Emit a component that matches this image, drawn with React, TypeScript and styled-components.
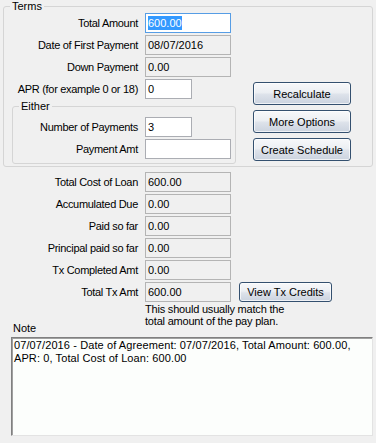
import styled, {createGlobalStyle, css} from "styled-components";

const GlobalStyle = createGlobalStyle`
    html, body {
        margin: 0;
        padding: 0;
        background: #f0f0f0;
    }
    body {
        font: 11px "Liberation Sans", Arial, sans-serif;
        color: #000;
    }
`

type FieldProps = {
    $readOnly?: boolean,
    $focused?: boolean,
    $short?: boolean,
}

function Row({label, value, readOnly, focused, short, labelWidth}: {
    label: string, value?: string, readOnly?: boolean, focused?: boolean, short?: boolean, labelWidth: number
}) {
    return (
        <FieldRow>
            <Label style={{width: labelWidth}}>{label}</Label>
            <Field $readOnly={readOnly} $focused={focused} $short={short}>
                {focused ? <Selected>{value}</Selected> : value}
            </Field>
        </FieldRow>
    )
}

function App() {
    return (
        <>
            <GlobalStyle/>
            <Page>
                <Group>
                    <Legend>Terms</Legend>
                    <TermsBody>
                        <LeftCol>
                            <Rows>
                                <Row labelWidth={134} label="Total Amount" value="600.00" focused/>
                                <Row labelWidth={134} label="Date of First Payment" value="08/07/2016" readOnly/>
                                <Row labelWidth={134} label="Down Payment" value="0.00" readOnly/>
                                <Row labelWidth={134} label="APR (for example 0 or 18)" value="0" short/>
                            </Rows>
                            <EitherGroup>
                                <Legend>Either</Legend>
                                <Rows>
                                    <Row labelWidth={125} label="Number of Payments" value="3" short/>
                                    <Row labelWidth={125} label="Payment Amt" value=""/>
                                </Rows>
                            </EitherGroup>
                        </LeftCol>
                        <Buttons>
                            <Button>Recalculate</Button>
                            <Button>More Options</Button>
                            <Button>Create Schedule</Button>
                        </Buttons>
                    </TermsBody>
                </Group>

                <Summary>
                    <Row labelWidth={138} label="Total Cost of Loan" value="600.00" readOnly/>
                    <Row labelWidth={138} label="Accumulated Due" value="0.00" readOnly/>
                    <Row labelWidth={138} label="Paid so far" value="0.00" readOnly/>
                    <Row labelWidth={138} label="Principal paid so far" value="0.00" readOnly/>
                    <Row labelWidth={138} label="Tx Completed Amt" value="0.00" readOnly/>
                    <FieldRow>
                        <Label style={{width: 138}}>Total Tx Amt</Label>
                        <Field $readOnly>600.00</Field>
                        <SmallButton>View Tx Credits</SmallButton>
                    </FieldRow>
                </Summary>

                <NoteHead>
                    <NoteLabel>Note</NoteLabel>
                    <Hint>This should usually match the<br/>total amount of the pay plan.</Hint>
                </NoteHead>
                <NoteBox>
                    07/07/2016 - Date of Agreement: 07/07/2016, Total Amount: 600.00, APR: 0, Total Cost of Loan: 600.00
                </NoteBox>
            </Page>
        </>
    )
}

export default App

const Page = styled.div`
    width: 376px;
    height: 443px;
    overflow: hidden;
`

const Group = styled.fieldset`
    margin: 0 0 0 3px;
    padding: 0 0 2px 0;
    width: 370px;
    box-sizing: border-box;
    border: 1px solid #d5d5d5;
    border-radius: 3px;
    min-width: 0;
`

const Legend = styled.legend`
    margin-left: 6px;
    padding: 0 2px;
    line-height: 13px;
    font-size: 11px;
`

const TermsBody = styled.div`
    display: flex;
`

const LeftCol = styled.div`
    display: flex;
    flex-direction: column;
    width: 233px;
`

const Rows = styled.div`
    display: flex;
    flex-direction: column;
    gap: 2px;
`

const EitherGroup = styled.fieldset`
    margin: 1px 0 0 8px;
    padding: 4px 0 4px 0;
    width: 224px;
    box-sizing: border-box;
    border: 1px solid #d5d5d5;
    border-radius: 3px;
    min-width: 0;
`

const FieldRow = styled.div`
    display: flex;
    align-items: center;
    gap: 7px;
    height: 20px;
`

const Label = styled.div`
    text-align: right;
    white-space: nowrap;
    flex: none;
    letter-spacing: -0.3px;
`

const Field = styled.div<FieldProps>`
    box-sizing: border-box;
    width: 86px;
    height: 20px;
    padding: 0 2px;
    display: flex;
    align-items: center;
    background: #fff;
    border: 1px solid #abadb3;
    white-space: nowrap;

    ${p => p.$short && css`
        width: 47px;
    `}

    ${p => p.$readOnly && css`
        background: #f0f0f0;
        border-color: #b4b4b4;
    `}

    ${p => p.$focused && css`
        border-color: #569de5;
    `}
`

const Selected = styled.span`
    background: #3399ff;
    color: #fff;
    line-height: 14px;
`

const Buttons = styled.div`
    display: flex;
    flex-direction: column;
    gap: 5px;
    margin: 69px 0 0 16px;
`

const buttonLook = css`
    box-sizing: border-box;
    font: 11px "Liberation Sans", Arial, sans-serif;
    color: #000;
    border: 1px solid #34506f;
    border-radius: 3px;
    background: linear-gradient(#f7f8fa 0%, #eceff3 45%, #dde2ea 55%, #cbd3df 100%);
    box-shadow: inset 0 0 0 1px rgba(255, 255, 255, 0.7);
    padding: 0;
`

const Button = styled.button`
    ${buttonLook};
    width: 98px;
    height: 23px;
`

const SmallButton = styled.button`
    ${buttonLook};
    width: 93px;
    height: 20px;
    margin-left: 1px;
`

const Summary = styled.div`
    display: flex;
    flex-direction: column;
    gap: 2px;
    margin-top: 5px;
`

const NoteHead = styled.div`
    display: flex;
    align-items: flex-end;
    height: 31px;
`

const NoteLabel = styled.div`
    width: 145px;
    padding-left: 13px;
    box-sizing: border-box;
    margin-bottom: -1px;
`

const Hint = styled.div`
    line-height: 12px;
    margin-bottom: 6px;
    letter-spacing: -0.2px;
`

const NoteBox = styled.div`
    box-sizing: border-box;
    margin: 4px 0 0 11px;
    width: 362px;
    height: 99px;
    padding: 1px 2px;
    background: #fcfefc;
    border: 1px solid;
    border-color: #808080 #e3e3e3 #e3e3e3 #808080;
    box-shadow: inset 1px 1px 0 #a0a0a0;
    line-height: 13px;
    letter-spacing: 0.1px;
`
